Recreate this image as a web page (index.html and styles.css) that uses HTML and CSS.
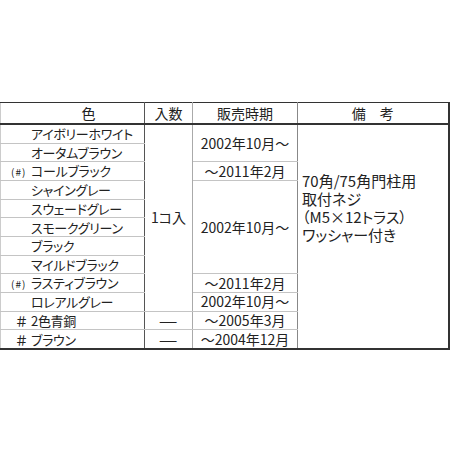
FILE: index.html
```html
<!DOCTYPE html>
<html lang="ja">
<head>
<meta charset="utf-8">
<link rel="stylesheet" href="styles.css">
</head>
<body>
<table class="spec">
  <colgroup>
    <col class="c-color">
    <col class="c-qty">
    <col class="c-date">
    <col class="c-note">
  </colgroup>
  <thead>
    <tr>
      <th class="h-color">色</th>
      <th class="h-qty">入数</th>
      <th class="h-date">販売時期</th>
      <th class="h-note">備　考</th>
    </tr>
  </thead>
  <tbody>
    <tr>
      <td class="name"><span class="pre"></span>アイボリーホワイト</td>
      <td class="qty" rowspan="10">1コ入</td>
      <td class="date" rowspan="2">2002年10月～</td>
      <td class="note" rowspan="12">70角/75角門柱用<br>取付ネジ<br>（M5×12トラス）<br>ワッシャー付き</td>
    </tr>
    <tr><td class="name"><span class="pre"></span>オータムブラウン</td></tr>
    <tr>
      <td class="name"><span class="pre small">(#)</span>コールブラック</td>
      <td class="date">～2011年2月</td>
    </tr>
    <tr>
      <td class="name"><span class="pre"></span>シャイングレー</td>
      <td class="date" rowspan="5">2002年10月～</td>
    </tr>
    <tr><td class="name"><span class="pre"></span>スウェードグレー</td></tr>
    <tr><td class="name"><span class="pre"></span>スモークグリーン</td></tr>
    <tr><td class="name"><span class="pre"></span>ブラック</td></tr>
    <tr><td class="name"><span class="pre"></span>マイルドブラック</td></tr>
    <tr>
      <td class="name"><span class="pre small">(#)</span>ラスティブラウン</td>
      <td class="date">～2011年2月</td>
    </tr>
    <tr>
      <td class="name"><span class="pre"></span>ロレアルグレー</td>
      <td class="date">2002年10月～</td>
    </tr>
    <tr class="sep">
      <td class="name"><span class="pre hash">＃</span>2色青銅</td>
      <td class="qty dash"><span class="bar">—</span></td>
      <td class="date">～2005年3月</td>
    </tr>
    <tr class="sep">
      <td class="name"><span class="pre hash">＃</span>ブラウン</td>
      <td class="qty dash"><span class="bar">—</span></td>
      <td class="date">～2004年12月</td>
    </tr>
  </tbody>
</table>
</body>
</html>
```

FILE: styles.css
```css
html, body {
  margin: 0;
  padding: 0;
  background: #ffffff;
}

body {
  font-family: "Noto Sans CJK JP", "Noto Sans", sans-serif;
  color: #222222;
  font-feature-settings: "palt";
}

.spec {
  margin-top: 102px;
  margin-left: 0;
  width: 448px;
  border-collapse: collapse;
  table-layout: fixed;
  border-top: 1px solid #333333;
  border-right: 2px solid #333333;
  border-bottom: 2px solid #333333;
  border-left: 1px solid #cccccc;
}

.c-color { width: 144px; }
.c-qty { width: 48px; }
.c-date { width: 105px; }
.c-note { width: 151px; }

.spec th {
  height: 20px;
  padding: 0;
  font-weight: normal;
  font-size: 14px;
  line-height: 20px;
  text-align: center;
  border-bottom: 2px solid #333333;
}

.h-color {
  padding-left: 32px !important;
  border-right: 1px solid #555555;
}
.h-qty { border-right: 1px solid #aaaaaa; }
.h-date { border-right: 1px solid #888888; }

.spec td {
  height: 17.6px;
  padding: 0;
  font-size: 14px;
  line-height: 17px;
  vertical-align: middle;
  white-space: nowrap;
  overflow: hidden;
}

.spec td.name {
  padding-left: 10px;
  font-size: 13px;
  letter-spacing: -0.3px;
  border-right: 1px solid #555555;
  border-bottom: 1px solid #c4c4c4;
}

.pre {
  display: inline-block;
  width: 20px;
  letter-spacing: 0;
}

.pre.small {
  font-size: 10px;
  letter-spacing: 1px;
  font-feature-settings: normal;
}

.pre.hash {
  padding-left: 4px;
  width: 16px;
  font-size: 13px;
  font-weight: 500;
  font-feature-settings: normal;
}

.qty {
  text-align: center;
  border-right: 1px solid #aaaaaa;
  border-bottom: 1px solid #c4c4c4;
}

.spec td.dash {
  font-feature-settings: normal;
  font-size: 14px;
  overflow: visible;
}

.bar {
  display: inline-block;
  transform: scaleX(1.5);
}

.date {
  text-align: center;
  border-right: 1px solid #888888;
  border-bottom: 1px solid #c4c4c4;
}

.spec td.note {
  vertical-align: top;
  padding: 47px 0 0 4px;
  font-size: 15px;
  line-height: 18px;
  white-space: normal;
}

.sep td {
  border-top: 1px solid #777777;
}

.spec tbody tr:last-child td {
  border-bottom: none;
}
```
